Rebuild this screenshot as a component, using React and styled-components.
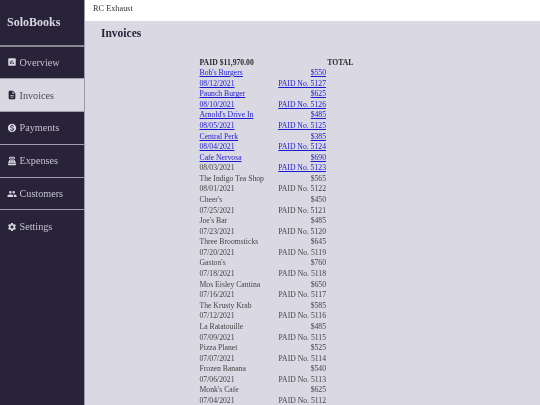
import React from "react"
import styled, { createGlobalStyle } from "styled-components"
import { MdAssessment, MdDescription, MdMonetizationOn, MdPeople, MdSettings, MdPointOfSale } from "react-icons/md"

const GlobalStyle = createGlobalStyle`
  html, body {
    margin: 0;
    padding: 0;
    height: 405px;
    overflow: hidden;
    font-family: "Liberation Serif", serif;
    background: #dad8e3;
  }
`

const Layout = styled.div`
  display: flex;
  width: 540px;
  height: 405px;
  overflow: hidden;
  will-change: transform;
`

const Sidebar = styled.nav`
  width: 85px;
  box-sizing: border-box;
  flex-shrink: 0;
  background: #282338;
  border-right: solid 1px #9d9aab;
`

const Brand = styled.div`
  height: 46.5px;
  padding: 1px 0 0 7px;
  box-sizing: border-box;
  display: flex;
  align-items: center;
  font-size: 12px;
  font-weight: bold;
  color: #dad8e3;
  border-bottom: solid 2px #8b8896;
`

const NavItem = styled.div`
  height: 32.8px;
  box-sizing: border-box;
  padding: 0 0 0 7px;
  display: flex;
  align-items: center;
  font-size: 10.2px;
  color: ${(props) => (props.$active ? "#4f4a60" : "#c4c1cf")};
  background: ${(props) => (props.$active ? "#dad8e3" : "#282338")};
  border-bottom: solid 1px #a09dae;

  &:last-child {
    border-bottom: none;
  }
`

const NavIcon = styled.span`
  width: 12.5px;
  flex-shrink: 0;
  display: flex;
  align-items: center;
  color: ${(props) => (props.$active ? "#282338" : "#dad8e3")};

  svg {
    font-size: 10px;
    flex-shrink: 0;
  }
`

const Main = styled.main`
  flex: 1;
  min-width: 0;
`

const TopBar = styled.div`
  height: 21px;
  background: #fff;
  padding: 3.5px 8px 0;
  box-sizing: border-box;
  font-size: 8.3px;
  color: #333;
`

const Title = styled.h1`
  margin: 0;
  padding: 6px 16px 0;
  font-size: 11.5px;
  color: #282338;
`

const InvoiceTable = styled.div`
  margin: 18.5px 0 0 114.5px;
  width: 126.5px;
  display: grid;
  grid-template-columns: 1fr auto;
  grid-auto-rows: 10.58px;
  font-size: 7.7px;
  line-height: 10.58px;
  color: #444;
`

const HeadCell = styled.span`
  font-weight: bold;
  color: #2b2b2b;
  white-space: nowrap;
`

const HeadTotal = styled(HeadCell)`
  margin-right: -27.5px;
  text-align: right;
`

const Cell = styled.span`
  text-align: ${(props) => (props.$right ? "right" : "left")};
  white-space: nowrap;
`

const Link = styled.a`
  color: #1a1ad0;
  text-decoration: underline;
`

const navItems = [
  { label: "Overview", icon: MdAssessment },
  { label: "Invoices", icon: MdDescription, active: true },
  { label: "Payments", icon: MdMonetizationOn },
  { label: "Expenses", icon: MdPointOfSale },
  { label: "Customers", icon: MdPeople },
  { label: "Settings", icon: MdSettings },
]

const invoices = [
  ["Bob's Burgers", "$550", "08/12/2021", "5127", true],
  ["Paunch Burger", "$625", "08/10/2021", "5126", true],
  ["Arnold's Drive In", "$485", "08/05/2021", "5125", true],
  ["Central Perk", "$385", "08/04/2021", "5124", true],
  ["Cafe Nervosa", "$690", "08/03/2021", "5123", true],
  ["The Indigo Tea Shop", "$565", "08/01/2021", "5122"],
  ["Cheer's", "$450", "07/25/2021", "5121"],
  ["Joe's Bar", "$485", "07/23/2021", "5120"],
  ["Three Broomsticks", "$645", "07/20/2021", "5119"],
  ["Gaston's", "$760", "07/18/2021", "5118"],
  ["Mos Eisley Cantina", "$650", "07/16/2021", "5117"],
  ["The Krusty Krab", "$585", "07/12/2021", "5116"],
  ["La Ratatouille", "$485", "07/09/2021", "5115"],
  ["Pizza Planet", "$525", "07/07/2021", "5114"],
  ["Frozen Banana", "$540", "07/06/2021", "5113"],
  ["Monk's Cafe", "$625", "07/04/2021", "5112"],
]

const wrap = (text, linked) => (linked ? <Link href="#">{text}</Link> : text)

const App = () => {
  return (
    <Layout>
      <GlobalStyle />
      <Sidebar>
        <Brand>SoloBooks</Brand>
        {navItems.map((item) => (
          <NavItem key={item.label} $active={item.active}>
            <NavIcon $active={item.active}>
              <item.icon />
            </NavIcon>
            {item.label}
          </NavItem>
        ))}
      </Sidebar>
      <Main>
        <TopBar>RC Exhaust</TopBar>
        <Title>Invoices</Title>
        <InvoiceTable>
          <HeadCell>PAID $11,970.00</HeadCell>
          <HeadTotal>TOTAL</HeadTotal>
          {invoices.map(([name, total, date, number, linked], i) => (
            <React.Fragment key={number}>
              <Cell>{wrap(name, linked)}</Cell>
              <Cell $right>{wrap(total, linked)}</Cell>
              <Cell>{wrap(date, linked && i !== 4)}</Cell>
              <Cell $right>{wrap(`PAID No. ${number}`, linked)}</Cell>
            </React.Fragment>
          ))}
        </InvoiceTable>
      </Main>
    </Layout>
  )
}

export default App
